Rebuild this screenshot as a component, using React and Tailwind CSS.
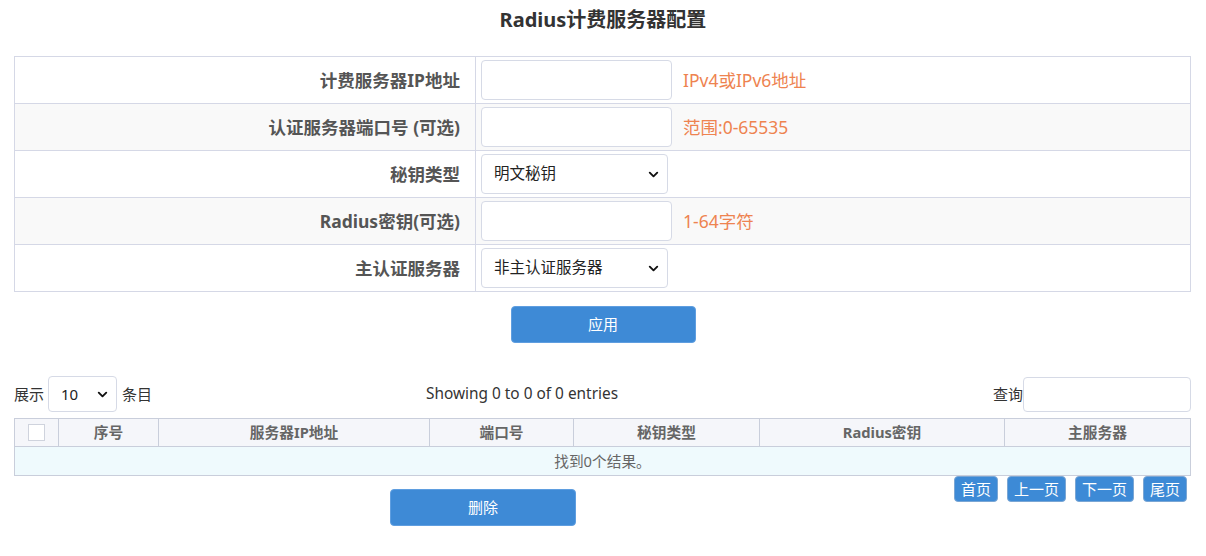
import { ChevronDown } from 'lucide-react'

const FONT = { fontFamily: '"Noto Sans", "Noto Sans CJK SC", sans-serif' }

const ROWS = [
  { label: '计费服务器IP地址', kind: 'input', hint: 'IPv4或IPv6地址' },
  { label: '认证服务器端口号 (可选)', kind: 'input', hint: '范围:0-65535' },
  { label: '秘钥类型', kind: 'select', value: '明文秘钥' },
  { label: 'Radius密钥(可选)', kind: 'input', hint: '1-64字符' },
  { label: '主认证服务器', kind: 'select', value: '非主认证服务器' },
]

const COLS = [
  { name: '序号', w: 'w-[100px]' },
  { name: '服务器IP地址', w: 'w-[271px]' },
  { name: '端口号', w: 'w-[144px]' },
  { name: '秘钥类型', w: 'w-[186px]' },
  { name: 'Radius密钥', w: 'w-[245px]' },
  { name: '主服务器', w: '' },
]

function FakeSelect({ value, className }) {
  return (
    <div className={`flex items-center justify-between border border-[#d6dae6] rounded-[4px] bg-white text-[#222] ${className}`}>
      <span>{value}</span>
      <ChevronDown size={15} strokeWidth={3} className="text-[#111]" />
    </div>
  )
}

function PageBtn({ children }) {
  return (
    <button className="h-[26px] px-[6px] rounded-[4px] bg-[#3d8ad6] border border-[#7aa6d4] text-white text-[15px] leading-none">
      {children}
    </button>
  )
}

export default function App() {
  return (
    <div style={FONT} className="w-[1206px] h-[556px] bg-white text-[#333] overflow-hidden">
      <h1 className="h-[40px] pt-[5px] text-center text-[20px] font-bold text-[#333]">Radius计费服务器配置</h1>

      <table className="mt-[16px] ml-[14px] w-[1177px] border-collapse">
        <tbody>
          {ROWS.map((r, i) => (
            <tr key={r.label} className={`h-[47px] ${i % 2 ? 'bg-[#f9f9f9]' : 'bg-white'}`}>
              <td className="w-[461px] border border-[#d5d8e6] pr-[15px] text-right text-[17.5px] font-bold text-[#555]">{r.label}</td>
              <td className="border border-[#d5d8e6] pl-[5px]">
                <div className="flex items-center">
                  {r.kind === 'input' ? (
                    <div className="w-[191px] h-[40px] bg-white border border-[#d6dae6] rounded-[4px]" />
                  ) : (
                    <FakeSelect value={r.value} className="w-[187px] h-[40px] pl-[12px] pr-[6px] text-[15.5px]" />
                  )}
                  {r.hint && <span className="ml-[11px] text-[17.5px] text-[#ee8350]">{r.hint}</span>}
                </div>
              </td>
            </tr>
          ))}
        </tbody>
      </table>

      <div className="flex justify-center mt-[14px]">
        <button className="w-[185px] h-[37px] rounded-[4px] bg-[#3e8ad6] text-white text-[15px] border border-[#5f9ee0]">应用</button>
      </div>

      <div className="flex items-center mt-[33px] ml-[14px] w-[1177px] h-[36px] text-[15px] text-[#333]">
        <div className="flex items-center w-[412px]">
          <span>展示</span>
          <FakeSelect value="10" className="ml-[4px] w-[69px] h-[36px] pl-[12px] pr-[6px] text-[15px]" />
          <span className="ml-[5px]">条目</span>
        </div>
        <span className="text-[15.4px]">Showing 0 to 0 of 0 entries</span>
        <div className="ml-auto flex items-center">
          <span>查询</span>
          <div className="w-[168px] h-[35px] border border-[#d6dae6] rounded-[4px] bg-white" />
        </div>
      </div>

      <table className="mt-[6px] ml-[14px] w-[1177px] border-collapse text-[14.7px]">
        <thead>
          <tr className="h-[28px] bg-[#f5f6fa]">
            <th className="w-[44px] border border-[#c9cedb]">
              <div className="mx-auto w-[17px] h-[17px] bg-white border border-[#cfd3dd]" />
            </th>
            {COLS.map(c => (
              <th key={c.name} className={`${c.w} border border-[#c9cedb] font-bold text-[#666]`}>{c.name}</th>
            ))}
          </tr>
        </thead>
        <tbody>
          <tr className="h-[29px] bg-[#effafd]">
            <td colSpan={7} className="border border-[#c9cedb] text-center text-[#666]">找到0个结果。</td>
          </tr>
        </tbody>
      </table>

      <div className="flex items-start ml-[14px] w-[1173px]">
        <button className="ml-[376px] mt-[13px] w-[186px] h-[37px] rounded-[4px] bg-[#3e8ad6] text-white text-[15px] border border-[#5f9ee0]">删除</button>
        <div className="ml-auto flex gap-[9px]">
          <PageBtn>首页</PageBtn>
          <PageBtn>上一页</PageBtn>
          <PageBtn>下一页</PageBtn>
          <PageBtn>尾页</PageBtn>
        </div>
      </div>
    </div>
  )
}
